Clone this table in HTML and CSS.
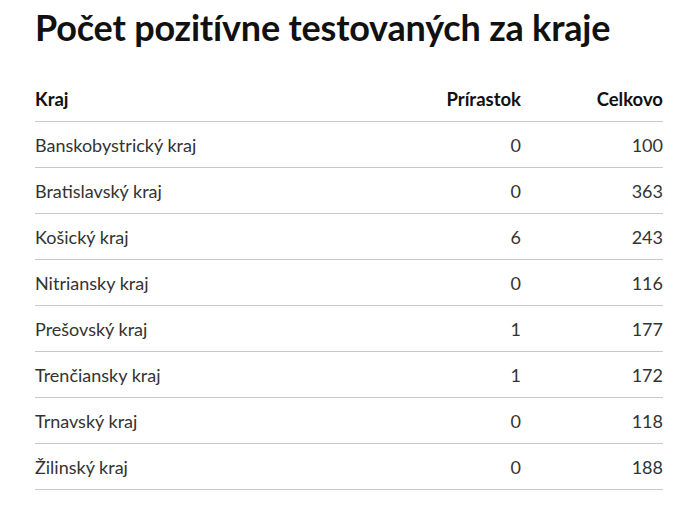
FILE: index.html
```html
<!DOCTYPE html>
<html lang="sk">
<head>
<meta charset="utf-8">
<link rel="stylesheet" href="styles.css">
</head>
<body>
<div class="page">
  <h1 class="title">Počet pozitívne testovaných za kraje</h1>
  <table class="tbl">
    <thead>
      <tr><th class="c-name">Kraj</th><th class="c-num">Prírastok</th><th class="c-num c-last">Celkovo</th></tr>
    </thead>
    <tbody>
      <tr><td class="c-name">Banskobystrický kraj</td><td class="c-num">0</td><td class="c-num c-last">100</td></tr>
      <tr><td class="c-name">Bratislavský kraj</td><td class="c-num">0</td><td class="c-num c-last">363</td></tr>
      <tr><td class="c-name">Košický kraj</td><td class="c-num">6</td><td class="c-num c-last">243</td></tr>
      <tr><td class="c-name">Nitriansky kraj</td><td class="c-num">0</td><td class="c-num c-last">116</td></tr>
      <tr><td class="c-name">Prešovský kraj</td><td class="c-num">1</td><td class="c-num c-last">177</td></tr>
      <tr><td class="c-name">Trenčiansky kraj</td><td class="c-num">1</td><td class="c-num c-last">172</td></tr>
      <tr><td class="c-name">Trnavský kraj</td><td class="c-num">0</td><td class="c-num c-last">118</td></tr>
      <tr><td class="c-name">Žilinský kraj</td><td class="c-num">0</td><td class="c-num c-last">188</td></tr>
    </tbody>
  </table>
</div>
</body>
</html>
```
FILE: styles.css
```css
html, body { margin: 0; padding: 0; background: #fff; }
body { font-family: "Lato", "Noto Sans", sans-serif; color: #222; }
.page { padding: 5px 30px 0 35px; }
.title {
  margin: 0;
  font-size: 36px;
  font-weight: 700;
  color: #111;
  line-height: 44px;
  letter-spacing: -0.2px;
}
.tbl {
  width: 628px;
  margin-top: 27px;
  border-collapse: collapse;
  font-size: 18px;
}
.tbl th, .tbl td {
  padding: 0;
  border-bottom: 1px solid #c8c8c8;
  vertical-align: middle;
}
.tbl th {
  font-weight: 700;
  color: #111;
  height: 45px;
  font-size: 18.5px;
}
.tbl td { height: 45px; color: #333; }
.c-name { text-align: left; }
.c-num { text-align: right; width: 140px; }
.c-last { width: 142px; }
```
